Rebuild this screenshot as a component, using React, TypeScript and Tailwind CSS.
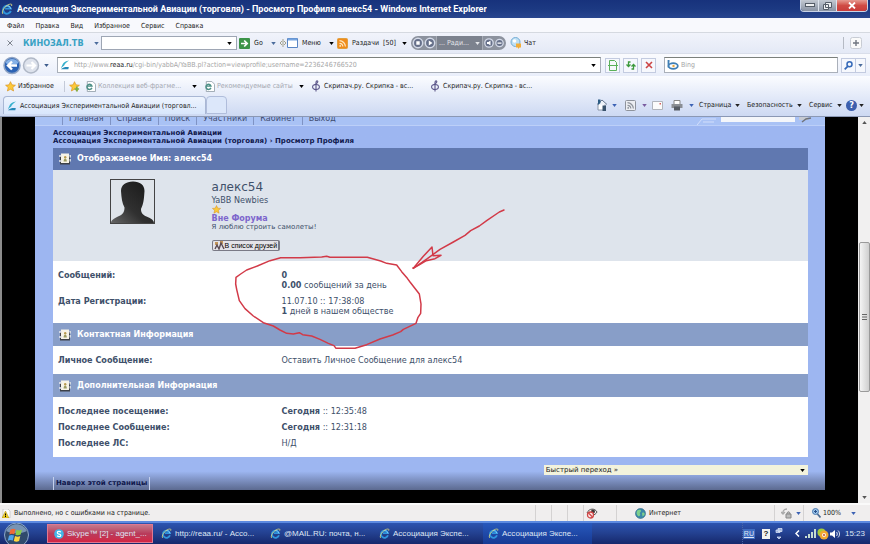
import React from 'react';
import clsx from 'clsx';

type IconProps = { className?: string };

function Caret({ className }: IconProps) {
  return (
    <svg viewBox="0 0 6 4" className={clsx('h-[3px] w-[5px] shrink-0', className)} aria-hidden="true">
      <path d="M0 0h6L3 4z" fill="currentColor" />
    </svg>
  );
}

function IeIcon({ className }: IconProps) {
  return (
    <svg viewBox="0 0 16 16" className={clsx('shrink-0', className)} aria-hidden="true">
      <path d="M13 10.5A5.2 5.2 0 1 1 13 7.500H5.500" fill="none" stroke="#2f95dd" strokeWidth="2.600" />
      <path d="M13 7.800C12.500 4.500 9.500 3 7 4" fill="none" stroke="#8fd4ff" strokeWidth="1.200" />
      <path d="M2.500 14.500C0 12 5 3.500 11 1.800c3-.9 4.200 0 3 2.200" fill="none" stroke="#d8d880" strokeWidth="1.200" />
    </svg>
  );
}

function SiteIcon({ className }: IconProps) {
  return (
    <svg viewBox="0 0 12 12" className={clsx('shrink-0', className)} aria-hidden="true">
      <path d="M1 10 3.500 4.500C4.500 2.500 7 1 11 .5 8.500 2 6 4 5 6.500z" fill="#35b0cc" />
      <path d="M1 11c3-2.500 6-3 9.500-2.500L10 11z" fill="#2388b8" />
    </svg>
  );
}

function PageIeIcon() {
  return (
    <svg viewBox="0 0 12 12" className="size-[11px] shrink-0" aria-hidden="true">
      <path d="M2.500.5h6l3 3v8h-9z" fill="#fff" stroke="#98a4ae" />
      <path d="M7.500 7.500A2.800 2.800 0 1 1 7.600 5.600H2.500" fill="none" stroke="#4c8f86" strokeWidth="1.600" />
    </svg>
  );
}

function StarIcon({ plus, className }: IconProps & { plus?: boolean }) {
  return (
    <svg viewBox="0 0 12 12" className={clsx('shrink-0', className)} aria-hidden="true">
      <path d="m6 .7 1.600 3.500 3.800.4-2.900 2.500.9 3.800L6 9l-3.400 1.900.9-3.800L.6 4.600l3.800-.4z" fill="#fcc93a" stroke="#d8901c" strokeWidth=".7" />
      {plus && <path d="M8.500 6v5.500M6 8.700h5" stroke="#78b04c" strokeWidth="1.800" />}
    </svg>
  );
}

function ViolinIcon() {
  return (
    <svg viewBox="0 0 10 12" className="h-3 w-2.5 shrink-0" aria-hidden="true">
      <g fill="none" stroke="#5a5488" strokeWidth="1.100">
        <path d="M5 11.500V2.500C5 .5 7 .3 6.800 2 6.600 3.200 5 3.800 3.500 4.800" />
        <ellipse cx="5" cy="7" rx="3.400" ry="2.500" />
      </g>
    </svg>
  );
}

function RssIcon({ gray }: { gray?: boolean }) {
  return (
    <svg viewBox="0 0 11 11" className="size-[11px] shrink-0" aria-hidden="true">
      <rect x=".5" y=".5" width="10" height="10" rx="1" fill={gray ? '#eceef2' : '#f08c1c'} stroke={gray ? '#8e939c' : '#e0a040'} />
      <g fill="none" stroke={gray ? '#8e939c' : '#ffe9c0'} strokeWidth="1.200">
        <path d="M2.500 5.300a3.400 3.400 0 0 1 3.300 3.300M2.500 2.700a6 6 0 0 1 5.900 5.900" />
      </g>
      <circle cx="3.200" cy="7.900" r=".9" fill={gray ? '#8e939c' : '#ffe9c0'} />
    </svg>
  );
}

function BookIcon() {
  return (
    <svg viewBox="0 0 13 12" className="h-3 w-[13px] shrink-0" aria-hidden="true">
      <path d="M1 3h10v8.500H1z" fill="#3c4048" />
      <path d="M2 .5h8v9.500H2z" fill="#f6f3e6" />
      <path d="M0 3h3M0 8h3" stroke="#e6e8ec" strokeWidth="1.300" />
      <path d="M10.500 2h1.500v2.500h-1.500zM10.500 6h1.500v2.500h-1.500z" fill="#cfd6de" />
      <circle cx="6.200" cy="4.200" r="1.200" fill="#b89a50" />
      <path d="M4.600 8.500c0-4 3.200-4 3.200 0z" fill="#9a9a60" />
    </svg>
  );
}

function TitleBar() {
  return (
    <header className="flex h-[18px] items-start bg-linear-to-b from-[#17327c] via-[#1c3982] to-[#29468e]">
      <div className="flex h-[18px] min-w-0 flex-1 items-center gap-1 pl-px">
        <IeIcon className="size-3" />
        <h1 className="truncate font-[Roboto,sans-serif] text-[9px] font-bold text-white">
          Ассоциация Экспериментальной Авиации (торговля) - Просмотр Профиля алекс54 - Windows Internet Explorer
        </h1>
      </div>
      <div className="mr-0.5 flex h-3 overflow-hidden rounded-b-sm border border-t-0 border-[#c9d3e6]">
        <button aria-label="Свернуть" className="flex w-[18px] items-center justify-center border-r border-[#dde4ee] bg-linear-to-b from-[#c3c9d2] to-[#8a94a4]">
          <svg viewBox="0 0 10 5" className="h-[5px] w-2.5"><rect x=".5" y=".5" width="9" height="3" fill="#eef0f2" stroke="#555d68" /></svg>
        </button>
        <button aria-label="Свернуть в окно" className="flex w-[18px] items-center justify-center border-r border-[#dde4ee] bg-linear-to-b from-[#c3c9d2] to-[#8a94a4]">
          <svg viewBox="0 0 9 8" className="h-2 w-[9px]"><path d="M2.500.5h6v5h-6zM.5 2.500h5v5h-5z" fill="#eef0f2" stroke="#555d68" /></svg>
        </button>
        <button aria-label="Закрыть" className="flex w-[30px] items-center justify-center bg-linear-to-b from-[#e59a92] via-[#cf4b45] to-[#c93c3a]">
          <svg viewBox="0 0 8 7" className="h-[7px] w-2"><path d="m1 .5 6 6m0-6-6 6" stroke="#fff" strokeWidth="1.800" /></svg>
        </button>
      </div>
    </header>
  );
}

function MenuBar() {
  const items = ['Файл', 'Правка', 'Вид', 'Избранное', 'Сервис', 'Справка'];
  return (
    <nav className="flex h-[15px] items-center gap-[11px] border-b border-[#d5d9e0] bg-[#f8f9fd] pt-0.5 pl-[7px]">
      {items.map((item) => (
        <button key={item}>{item}</button>
      ))}
    </nav>
  );
}

function RadioPlayer() {
  return (
    <div className="flex h-3.5 w-[95px] items-center rounded-full bg-[#8c929e] px-px text-[#e4e6ea]">
      <svg viewBox="0 0 24 12" className="h-3 w-6" aria-hidden="true">
        <g fill="#66708a" stroke="#d4dae8" strokeWidth="1.500">
          <circle cx="6" cy="6" r="4.700" />
          <circle cx="18" cy="6" r="4.700" />
        </g>
        <path d="M4.300 4.300h3.400v3.400H4.300zM16.800 3.500v5L20.500 6z" fill="#fff" />
      </svg>
      <button className="flex h-full flex-1 items-center justify-center gap-1.5 border-x border-[#a6abb5] bg-[#7c828e]">
        ... Ради... <Caret />
      </button>
      <svg viewBox="0 0 22 12" className="h-3 w-[22px]" aria-hidden="true">
        <g fill="#66708a" stroke="#d4dae8" strokeWidth="1.300">
          <circle cx="6" cy="6" r="4.200" />
          <circle cx="16.500" cy="6" r="3.700" />
        </g>
        <path d="M4 5h1.500L7.500 3.500v5L5.500 7H4zM14.500 5.400h4v1.300h-4z" fill="#fff" />
      </svg>
    </div>
  );
}

function LinksBar() {
  return (
    <div className="flex h-[21px] items-center border-b border-[#d9deea] bg-linear-to-b from-[#f1f3fb] to-[#e4e9f6]">
      <button aria-label="Закрыть панель" className="ml-[7px] w-4">
        <svg viewBox="0 0 6 6" className="size-1.5"><path d="m.5.5 5 5m0-5-5 5" stroke="#7c828c" /></svg>
      </button>
      <button className="flex w-[78px] items-center justify-between pr-0.5 text-[#4b6c9c]">
        <span className="font-[DejaVu_Sans_Condensed,DejaVu_Sans,sans-serif] text-[9px] font-bold text-[#3aa2c4]">КИНОЗАЛ.ТВ</span>
        <Caret />
      </button>
      <div className="flex h-3.5 w-[136px] items-center border border-[#9ea6b4] bg-white pr-1">
        <input aria-label="Поиск по сайту" className="h-full min-w-0 flex-1 px-1 outline-none" />
        <Caret className="text-black" />
      </div>
      <button className="flex w-[42px] items-center gap-1 pl-0.5">
        <svg viewBox="0 0 11 11" className="size-[11px] shrink-0"><rect width="11" height="11" rx="1" fill="#3c9448" /><path d="M2 5.500h5M5.200 2.500l3 3-3 3" fill="none" stroke="#fff" strokeWidth="1.700" /></svg>
        Go
        <Caret className="ml-1 text-[#4b6c9c]" />
      </button>
      <svg viewBox="0 0 8 8" className="size-2 shrink-0" aria-hidden="true"><path d="M4 0v8M3 2 1 4l2 2M5 2l2 2-2 2" fill="none" stroke="#a3a18c" /></svg>
      <button className="flex w-[47px] items-center gap-1">
        <svg viewBox="0 0 11 10" className="h-2.5 w-[11px] shrink-0"><path d="M.5.5h10v9H.5z" fill="#fff" stroke="#5a86c4" /><path d="M1 1.500h9" stroke="#75a4e0" strokeWidth="2" /></svg>
        Меню
        <Caret className="ml-auto text-black" />
      </button>
      <button className="flex w-[73px] items-center gap-1 pl-[3px]">
        <RssIcon />
        Раздачи&nbsp; [50]
        <Caret className="ml-auto text-black" />
      </button>
      <div className="ml-1"><RadioPlayer /></div>
      <button className="ml-1 flex items-center gap-0.5">
        <svg viewBox="0 0 12 12" className="size-3"><circle cx="5.500" cy="5" r="4.500" fill="#bfe0f4" stroke="#74acd4" /><circle cx="4.500" cy="4" r="1.800" fill="#fff" /><path d="M6 6.500h5v4H9.500L8 12v-1.500H6z" fill="#f2ad38" /></svg>
        Чат
      </button>
      <button aria-label="Добавить" className="mr-2 ml-auto border-l border-[#b5bac4] pl-1.5">
        <svg viewBox="0 0 12 12" className="size-3"><rect x=".5" y=".5" width="11" height="11" rx="2" fill="#fafafa" stroke="#c8ccd4" /><path d="M6 3v6M3 6h6" stroke="#707680" strokeWidth="1.400" /></svg>
      </button>
    </div>
  );
}

const SQUARE = 'flex size-[15px] shrink-0 items-center justify-center border border-[#c3cbe0] bg-[#f6f8fd]';

function AddressBar() {
  return (
    <div className="flex h-[22px] items-center bg-linear-to-b from-[#fafbfe] to-[#e9eefa]">
      <div className="flex w-[57px] shrink-0 items-center gap-1 pl-[3px]">
        <svg viewBox="0 0 37 19" className="h-[19px] w-[37px]" aria-hidden="true">
          <circle cx="9" cy="9.500" r="8" fill="#2b62b4" stroke="#8fa4c4" strokeWidth="1.500" />
          <path d="M2.500 7C4 1.500 14 1.500 15.500 7 12 9 6 9 2.500 7z" fill="#86b1e6" />
          <path d="M14 9.500H6M9 5.500l-4 4 4 4" fill="none" stroke="#fff" strokeWidth="2.400" />
          <circle cx="28" cy="9.500" r="7.500" fill="#dde2ec" stroke="#b0b8c6" strokeWidth="1.500" />
          <path d="M23.500 9.500h8M28.500 6l3.500 3.500-3.500 3.500" fill="none" stroke="#fff" strokeWidth="2.200" />
        </svg>
        <Caret className="text-[#3c5c8c]" />
      </div>
      <div className="flex h-4 min-w-0 flex-1 items-center border border-[#aab0ba] border-t-[#7b807c] bg-white pr-1 pl-0.5">
        <SiteIcon className="size-2.5" />
        <div className="ml-1 min-w-0 flex-1 truncate text-[#a6a6a6]">
          http://www.<span className="text-[#222]">reaa.ru</span>/cgi-bin/yabbA/YaBB.pl?action=viewprofile;username=2236246766520
        </div>
        <Caret className="text-black" />
      </div>
      <div className="flex gap-[3px] px-1">
        <button aria-label="Режим совместимости" className={SQUARE}>
          <svg viewBox="0 0 10 11" className="h-[11px] w-2.5"><path d="M1.500.5h5l2 2v8h-7zM0 5.500h10" fill="none" stroke="#5ab05a" /></svg>
        </button>
        <button aria-label="Обновить" className={SQUARE}>
          <svg viewBox="0 0 10 9" className="h-[9px] w-2.5"><path d="M4.500 1H2.500v4M.5 3.500l2 2 2-2M5.500 8h2V3.500M5.500 5.500l2-2 2 2" fill="none" stroke="#3d9a3d" strokeWidth="1.300" /></svg>
        </button>
        <button aria-label="Остановить" className={SQUARE}>
          <svg viewBox="0 0 8 8" className="size-2"><path d="m1 1 6 6m0-6L1 7" stroke="#cc4444" strokeWidth="1.600" /></svg>
        </button>
      </div>
      <div className="ml-1 flex h-4 w-[174px] items-center gap-0.5 border border-[#aab0ba] border-t-[#7b807c] bg-white pl-0.5">
        <svg viewBox="0 0 12 10" className="h-2.5 w-3 shrink-0" aria-hidden="true">
          <path d="M1.500 0v7.500M1 1h1.500" stroke="#3f7fb6" strokeWidth="1.800" />
          <ellipse cx="6.200" cy="6" rx="4.600" ry="2.800" fill="#fff" stroke="#3f7fb6" strokeWidth="1.800" />
          <circle cx="6.500" cy="6" r="1.200" fill="#e8a63c" />
        </svg>
        <input aria-label="Поиск" placeholder="Bing" className="h-full min-w-0 flex-1 outline-none placeholder:text-[#a6a6a6]" />
      </div>
      <button aria-label="Найти" className={clsx(SQUARE, 'ml-[3px]')}>
        <svg viewBox="0 0 9 9" className="size-[9px]"><circle cx="5.500" cy="3.300" r="2.500" fill="none" stroke="#3569b8" strokeWidth="1.500" /><path d="m3.700 5.300-3 3" stroke="#3569b8" strokeWidth="1.800" /></svg>
      </button>
      <button aria-label="Варианты поиска" className="mr-1 flex h-[15px] w-2.5 items-center justify-center border border-l-0 border-[#c3cbe0] bg-[#f6f8fd] text-[#4b6c9c]">
        <Caret />
      </button>
    </div>
  );
}

function FavoritesBar() {
  return (
    <div className="flex h-5 items-center pl-[5px]">
      <button className="flex w-[59px] items-center gap-0.5"><StarIcon className="size-[11px]" />Избранное</button>
      <button aria-label="Добавить в избранное" className="w-[21px] border-l border-[#c4cad8] pl-1">
        <StarIcon plus className="size-[11px]" />
      </button>
      <button className="flex w-[119px] items-center gap-0.5 text-[#a3a7b0]">
        <PageIeIcon />Коллекция веб-фрагме...
        <Caret className="mr-[7px] ml-auto text-black" />
      </button>
      <button className="flex w-[107px] items-center gap-0.5 text-[#a3a7b0]">
        <PageIeIcon />Рекомендуемые сайты
        <Caret className="mr-[7px] ml-auto text-black" />
      </button>
      <a href="#" className="flex w-[119px] items-center gap-[3px]"><ViolinIcon />Скрипач.ру. Скрипка - вс...</a>
      <a href="#" className="flex items-center gap-[3px]"><ViolinIcon />Скрипач.ру. Скрипка - вс...</a>
    </div>
  );
}

function TabBar() {
  return (
    <div className="flex h-[21px] items-start justify-between border-b border-[#8b98b4] pr-1.5 pl-[3px]">
      <div className="flex h-[18px] items-stretch">
        <button className="flex w-[203px] items-center gap-[3px] rounded-t-sm border border-b-0 border-[#a9b7d4] bg-linear-to-b from-[#eef4fe] to-[#d8e6fc] pl-[3px]">
          <SiteIcon className="size-2.5" />
          Ассоциация Экспериментальной Авиации (торговл...
        </button>
        <button aria-label="Новая вкладка" className="w-[21px] rounded-t-sm border border-[#b0bddb] bg-[#dce7fa]" />
      </div>
      <div className="flex h-[18px] items-center text-[#222]">
        <button aria-label="Домой" className="flex w-[29px] items-center gap-1">
          <svg viewBox="0 0 12 12" className="size-3"><path d="M1 5.500 6 1l5 4.500" fill="#eef2f8" stroke="#64748c" /><path d="M2 5.500V11h7V5.500" fill="#fff" stroke="#8a96a8" /><path d="M2 .5h2.500V4L2 6z" fill="#2c5c84" /><path d="M6.500 6.500h3.500V12H6.500z" fill="#39526c" /></svg>
          <Caret className="text-[#3c62b4]" />
        </button>
        <button aria-label="Каналы" className="flex w-[27px] items-center gap-1.5">
          <RssIcon gray /><Caret className="text-[#7a5ca0]" />
        </button>
        <button aria-label="Почта" className="w-[19px]">
          <svg viewBox="0 0 11 9" className="h-[9px] w-[11px]"><path d="M.5.5h10v8H.5z" fill="#fbfbfb" stroke="#b0b4bc" /><path d="M7.500 2h1.500v1.500H7.500z" fill="#d86060" /></svg>
        </button>
        <button aria-label="Печать" className="flex w-7 items-center gap-1.5">
          <svg viewBox="0 0 12 11" className="h-[11px] w-3"><path d="M3 .5h6v4H3z" fill="#fff" stroke="#888" /><path d="M.5 4h11v4H.5z" fill="#8a8e94" /><path d="M3 6.500h6v4H3z" fill="#555b64" /></svg>
          <Caret className="text-[#3c62b4]" />
        </button>
        <button className="flex w-12 items-center gap-1">Страница<Caret /></button>
        <button className="flex w-[62px] items-center gap-1">Безопасность<Caret /></button>
        <button className="flex w-[37px] items-center gap-1">Сервис<Caret /></button>
        <button aria-label="Справка" className="flex items-center gap-0.5">
          <span className="flex size-[11px] items-center justify-center rounded-full bg-[#3c5fae] text-[9px] font-bold text-white">?</span>
          <Caret />
        </button>
      </div>
    </div>
  );
}

function ForumNav() {
  const items = ['Главная', 'Справка', 'Поиск', 'Участники', 'Кабинет', 'Выход'];
  return (
    <div className="flex h-[9px] items-end justify-between overflow-hidden border-b border-[#bccff8] bg-[#a9c2f5] pl-[27px]">
      <ul className="flex items-end">
        {items.map((item) => (
          <li key={item} className="border-l border-[#7f93c4] px-1.5 text-[8px] leading-[12px]">
            <a href="#" className="text-[#414c70]">{item}</a>
          </li>
        ))}
      </ul>
      <div className="flex h-full items-start gap-1 pr-3">
        <svg viewBox="0 0 20 8" className="h-2 w-5" aria-hidden="true"><path d="M0 8 5 2h14M6 5h11" fill="none" stroke="#d2defb" /></svg>
        <input aria-label="Поиск по форуму" className="h-[5px] w-[74px] bg-[#f4f6fa]" />
        <svg viewBox="0 0 14 6" className="h-1.5 w-3.5" aria-hidden="true"><path d="M0 0h9v3H0z" fill="#c6cad2" /><path d="m3 5 4-3 5-1" stroke="#70747c" strokeWidth="1.500" fill="none" /></svg>
      </div>
    </div>
  );
}

function SectionRow({ title, dark }: { title: string; dark?: boolean }) {
  return (
    <tr className={dark ? 'bg-[#6078b0]' : 'bg-[#889ec8]'}>
      <th colSpan={2} className={clsx('text-left font-[DejaVu_Sans,Verdana,sans-serif] text-[8px] font-bold text-white', dark ? 'h-[22px]' : 'h-[23px]')}>
        <div className="flex items-center gap-[5px] pl-1.5">
          <BookIcon />
          {title}
        </div>
      </th>
    </tr>
  );
}

function InfoRow({ label, className, children }: { label: string; className?: string; children: React.ReactNode }) {
  return (
    <tr className={clsx('bg-white', className)}>
      <th className="pl-[5px] text-left align-top font-bold">{label}</th>
      <td className="pl-0.5 align-top">{children}</td>
    </tr>
  );
}

function Avatar() {
  return (
    <svg viewBox="0 0 45 45" className="size-[45px]" role="img" aria-label="Аватар">
      <defs>
        <linearGradient id="skin" x1="0" x2="1" y1="1" y2="0">
          <stop offset="0" stopColor="#666" />
          <stop offset=".4" stopColor="#303030" />
          <stop offset="1" stopColor="#161616" />
        </linearGradient>
      </defs>
      <rect x=".5" y=".5" width="44" height="44" fill="#dfe4ea" stroke="#444" />
      <path d="M1 44c0-3 3-4.500 7-6.500 5-2 6.500-4.500 6.500-9C12 24 11.500 19 11 12c0-6 5-9.500 12-9.500S34.500 6 34.500 12c-.5 8-1 13-3.500 18 0 4 2 6 5.500 7.500 5 2 7.500 4 7.500 6.500z" fill="url(#skin)" />
    </svg>
  );
}

function ProfileCard() {
  return (
    <div className="flex h-[91px] bg-[#dee4ec] pt-[9px]">
      <div className="flex w-[21%] justify-center"><Avatar /></div>
      <div className="flex flex-col items-start">
        <h2 className="font-[DejaVu_Sans,Verdana,sans-serif] text-[12px] leading-4">алекс54</h2>
        <p>YaBB Newbies</p>
        <StarIcon className="size-[9px]" />
        <p className="font-[DejaVu_Sans,Verdana,sans-serif] text-[8px] leading-[9px] font-bold text-[#7d66cc]">Вне Форума</p>
        <p className="font-[DejaVu_Sans,Verdana,sans-serif] text-[7px] leading-[9px]">Я люблю строить самолеты!</p>
        <button className="mt-2 flex h-[11px] items-center rounded-xs border border-[#7a7a86] border-r-2 bg-[#e4e3e8] px-px font-[Liberation_Sans,Arial,sans-serif] text-[7px] text-black">
          <svg viewBox="0 0 11 9" className="h-[9px] w-[11px]" aria-hidden="true"><path d="M1 1h3v3H1zM6 0h3v3H6z" fill="#c4965a" /><path d="m1 8 2-4 2 4 2-6 3 6" fill="none" stroke="#5a4a52" strokeWidth="1.400" /></svg>
          В список друзей
        </button>
      </div>
    </div>
  );
}

// Hand-drawn red circle and arrow over the registration data
function Scribble() {
  return (
    <svg viewBox="0 0 900 540" className="pointer-events-none absolute top-8 left-[167px] h-[180px] w-[300px]" aria-hidden="true">
      <g fill="none" stroke="#d23a48" strokeWidth="4.500" strokeLinejoin="round" strokeLinecap="round">
        <path d="M48 292 62 282 80 270 112 258 150 242 182 233 240 233 305 231 320 229 330 232 442 232 482 243 500 250 530 255 545 275 562 295 570 306 598 342 603 372 602 400 594 412 588 430 550 448 542 455 518 465 480 477 440 494 405 505 348 505 342 497 325 490 300 478 275 468 248 464 238 458 220 462 200 460 180 450 160 438 130 428 100 408 75 386 58 362 50 328 47 312z" />
        <path d="M852 90 838 96 800 122 778 138 752 152 735 166 700 186 660 208 622 236 580 265" />
        <path d="m580 265 30-36 26-28 3 26 24-1-18 10-26 6-24 14-16 8z" />
      </g>
    </svg>
  );
}

function ForumPage() {
  return (
    <main className="flex min-h-0 flex-1 border-l-2 border-[#8c8c8c] bg-black">
      <div className="min-w-0 flex-1 px-[33px] pb-[13px]">
        <div className="bg-linear-to-b from-[#9db6f1] from-95% to-[#5c6a90] font-[DejaVu_Sans,Verdana,sans-serif] text-[9px] leading-[10px] text-[#40506a]">
          <ForumNav />
          <div className="pr-[17px] pl-[18px]">
            <div className="pt-[3px] pb-[3px] text-[7px] leading-[8px] font-bold text-[#10184c]">
              <p><a href="#">Ассоциация Экспериментальной Авиации</a></p>
              <p><a href="#">Ассоциация Экспериментальной Авиации (торговля)</a> › Просмотр Профиля</p>
            </div>
            <div className="relative">
              <table className="w-full table-fixed border-collapse font-[DejaVu_Sans_Condensed,DejaVu_Sans,sans-serif] text-[9px]">
                <colgroup>
                  <col className="w-[30%]" />
                  <col />
                </colgroup>
                <tbody>
                  <SectionRow dark title="Отображаемое Имя: алекс54" />
                  <tr><td colSpan={2} className="p-0"><ProfileCard /></td></tr>
                  <InfoRow label="Сообщений:" className="h-[35px] [&>*]:pt-[9px]">
                    <b>0</b><br /><b>0.00</b> сообщений за день
                  </InfoRow>
                  <InfoRow label="Дата Регистрации:" className="h-[27px]">
                    11.07.10 :: 17:38:08<br /><b>1</b> дней в нашем обществе
                  </InfoRow>
                  <SectionRow title="Контактная Информация" />
                  <InfoRow label="Личное Сообщение:" className="h-7 [&>*]:pt-[9px]">
                    <a href="#">Оставить Личное Сообщение для алекс54</a>
                  </InfoRow>
                  <SectionRow title="Дополнительная Информация" />
                  <InfoRow label="Последнее посещение:" className="h-[25px] [&>*]:pt-[9px]"><b>Сегодня</b> :: 12:35:48</InfoRow>
                  <InfoRow label="Последнее Сообщение:" className="h-4"><b>Сегодня</b> :: 12:31:18</InfoRow>
                  <InfoRow label="Последнее ЛС:" className="h-[19px]">Н/Д</InfoRow>
                </tbody>
              </table>
              <Scribble />
            </div>
            <div className="mt-2 ml-auto grid w-[35%] items-center text-[7px]">
              <select aria-label="Быстрый переход" className="col-start-1 row-start-1 h-2.5 appearance-none bg-[#f3f3dc] pl-0.5 text-[#222] outline-none">
                <option>Быстрый переход »</option>
              </select>
              <Caret className="pointer-events-none col-start-1 row-start-1 mr-[3px] justify-self-end text-black" />
            </div>
            <div className="mt-0.5 flex h-[13px]">
              <a href="#" className="border-x border-[#c4d0ec] px-0.5 text-[7px] leading-[12px] font-bold text-[#10184c]">Наверх этой страницы</a>
            </div>
          </div>
        </div>
      </div>
      <div className="flex w-3 flex-col items-center justify-between bg-[#f1f0f0] py-1 text-[#555]">
        <Caret className="rotate-180" />
        <div className="mt-[118px] mb-auto flex h-[150px] w-[11px] items-center justify-center rounded-xs border border-[#9a9a9a] bg-linear-to-r from-[#f4f4f4] to-[#cfcfcf]">
          <svg viewBox="0 0 5 6" className="h-1.5 w-[5px]" aria-hidden="true"><path d="M0 .5h5M0 3h5M0 5.500h5" stroke="#666" /></svg>
        </div>
        <Caret />
      </div>
    </main>
  );
}

function StatusBar() {
  return (
    <footer className="flex h-[18px] items-stretch border-t-2 border-[#fafafa] bg-[#f0eeee]">
      <div className="flex flex-1 items-center gap-[3px] pl-0.5">
        <svg viewBox="0 0 9 9" className="size-[9px]" aria-hidden="true"><path d="M1 0h5l2 2v7H1z" fill="#fff" stroke="#aaa" strokeWidth=".5" /><path d="M0 9 3.500 2 7 9z" fill="#f3d024" stroke="#9a8618" strokeWidth=".5" /><path d="M3.500 4.500v2M3.500 7v1" stroke="#000" /></svg>
        Выполнено, но с ошибками на странице.
      </div>
      <div className="w-4 border-l border-[#d4d2d2]" />
      <div className="w-4 border-l border-[#d4d2d2]" />
      <div className="w-4 border-l border-[#d4d2d2]" />
      <div className="flex w-[33px] items-center border-l border-[#d4d2d2] pl-0.5">
        <svg viewBox="0 0 12 12" className="size-3" aria-hidden="true"><path d="M1 6c2-5 8-5 10-1-2 4-7 4-10 1z" fill="#eee" stroke="#555" /><circle cx="7" cy="4.500" r="2" fill="#403838" /><circle cx="4.500" cy="8" r="3" fill="#fbe8e8" stroke="#d04848" strokeWidth="1.300" /><path d="m2.500 6 4 4" stroke="#d04848" strokeWidth="1.300" /></svg>
      </div>
      <div className="w-4 border-l border-[#d4d2d2]" />
      <div className="flex w-[142px] items-center gap-[3px] pl-[3px]">
        <svg viewBox="0 0 11 11" className="size-[11px]" aria-hidden="true"><circle cx="5.500" cy="5.500" r="5" fill="#3b88a8" stroke="#2a6684" strokeWidth=".6" /><path d="M2 3c2-2 4-1 4 0S4 5 5 6 4 9 3 8 1 5 2 3zM7 5c2-1 3 0 2.500 2L7.500 8.500z" fill="#7fd08c" /></svg>
        Интернет
      </div>
      <button aria-label="Защищенный режим" className="flex w-[29px] items-center gap-1 border-l border-[#d4d2d2] pl-1.5 text-[#3c62b4]">
        <svg viewBox="0 0 11 11" className="size-[11px]" aria-hidden="true"><path d="M6 1C3 1 1.500 3 2 6M0 4l2 2 2-2" fill="none" stroke="#aaa" strokeWidth="1.300" /><path d="M5 6h5v4H5zM6 6c0-3 3-3 3 0" fill="#bbb" stroke="#888" /></svg>
        <Caret />
      </button>
      <button className="mr-3.5 flex items-center gap-0.5 border-l border-[#d4d2d2] pl-2">
        <svg viewBox="0 0 9 10" className="h-2.5 w-[9px]" aria-hidden="true"><circle cx="3.500" cy="3.500" r="3" fill="#9cc4e8" stroke="#4a7ab0" /><path d="m5.500 6 3 3.500" stroke="#4a6a90" strokeWidth="1.700" /><path d="M3.500 2v3M2 3.500h3" stroke="#28508c" /></svg>
        100%
        <Caret className="ml-2 text-[#3c62b4]" />
      </button>
    </footer>
  );
}

function TaskBar() {
  const windows = ['http://reaa.ru/ - Ассо...', '@MAIL.RU: почта, н...', 'Ассоциация Экспе...', 'Ассоциация Экспе...'];
  return (
    <div className="flex h-[23px] shrink-0 items-stretch border-t-2 border-[#5c8ae0] bg-linear-to-b from-[#2c54b0] via-[#23408f] to-[#16286c] font-[Liberation_Sans,Arial,sans-serif] text-[8px] text-[#dfe6f4]">
      <button aria-label="Пуск" className="w-[47px] pl-[3px]">
        <svg viewBox="0 0 28 21" className="h-[21px] w-7" aria-hidden="true">
          <circle cx="13.500" cy="12" r="12" fill="#304a6c" stroke="#8da8cc" />
          <path d="M3 8C7-1 20-1 24 8 18 11 9 11 3 8z" fill="#7894b4" />
          <path d="M7.500 6.500c2-1.200 3.500-1 5-.2l-1.200 5c-1.500-.8-3-.9-5 .1z" fill="#f06a38" />
          <path d="M13.500 6.700c2 1 3.500 1 5.500-.1l-1.300 5c-2 1-3.500 1-5.300.1z" fill="#8ccc48" />
          <path d="M6 12.700c2-1.100 3.500-.8 5-.1l-1.200 5c-1.500-.8-3-.9-5 .1z" fill="#50a4ec" />
          <path d="M12 13c2 1 3.500 1 5.300 0l-1.200 5c-2 1-3.500.9-5.300 0z" fill="#fcd440" />
        </svg>
      </button>
      <button className="my-px flex w-[106px] items-center gap-[3px] border border-[#e07890] bg-linear-to-b from-[#c4788c] via-[#b83c5c] to-[#d42444] pl-1.5">
        <svg viewBox="0 0 10 10" className="size-2.5" aria-hidden="true"><circle cx="5" cy="5" r="4.800" fill="#42b6e8" /><path d="M6.800 3.300C6 2 3.300 2.200 3.300 3.700c0 1.700 3.500 1 3.500 2.600C6.800 8 4 8 3.200 6.600" fill="none" stroke="#fff" strokeWidth="1.200" /></svg>
        Skype™ [2] - agent_...
      </button>
      <div className="flex flex-1 pl-[3px]">
        {windows.map((title, i) => (
          <button key={i} className={clsx('flex w-[109px] items-center gap-[3px] pl-[5px]', i === 3 && 'bg-linear-to-b from-[#2858bc] to-[#173a94]')}>
            <IeIcon className="size-[11px]" />
            {title}
          </button>
        ))}
      </div>
      <div className="flex items-center gap-[5px] border-l border-dotted border-[#4a64a4] pr-[5px]">
        <button className="bg-[#3f6cc0] px-px text-[7px] underline">RU</button>
        <button className="ml-0.5 flex h-2.5 w-2 items-center justify-center bg-[#f4f4f0] font-bold text-[#222]">?</button>
        <svg viewBox="0 0 8 12" className="h-3 w-2" aria-hidden="true"><path d="M3 .5h4v3H3zM1 2h4v2.500H1zM2 9h4L4 11z" fill="#8ea8dc" stroke="#e8eefa" strokeWidth=".7" /></svg>
        <svg viewBox="0 0 5 7" className="ml-[7px] h-[7px] w-[5px]" aria-hidden="true"><path d="M4 .5 1 3.500l3 3" fill="none" stroke="#fff" strokeWidth="1.500" /></svg>
        <div className="flex items-center gap-px">
          <svg viewBox="0 0 11 9" className="h-[9px] w-[11px]" aria-hidden="true"><path d="M1 9V7M4 9V5M7 9V3M10 9V0" stroke="#c4dcd0" strokeWidth="2" /></svg>
          <svg viewBox="0 0 12 12" className="size-3" aria-hidden="true"><circle cx="4.500" cy="4.500" r="4" fill="#a4cc3c" /><circle cx="7" cy="7" r="4.500" fill="#f4a830" /><circle cx="7" cy="7" r="2" fill="#fbf4e8" /><circle cx="7" cy="7" r="1" fill="#c84c30" /></svg>
          <svg viewBox="0 0 10 10" className="size-2.5" aria-hidden="true"><path d="M0 3.500h2L5 1v8L2 6.500H0z" fill="#fff" /><path d="M6.500 3c1 1 1 3 0 4M8 1.500c2 2 2 5 0 7" fill="none" stroke="#dfe6f4" /></svg>
        </div>
        <time>15:23</time>
      </div>
    </div>
  );
}

export default function App() {
  return (
    <div className="flex min-h-screen flex-col font-[DejaVu_Sans_Condensed,DejaVu_Sans,sans-serif] text-[7px] leading-[10px] whitespace-nowrap text-[#222]">
      <TitleBar />
      <MenuBar />
      <LinksBar />
      <AddressBar />
      <div className="bg-linear-to-b from-[#fbfcff] to-[#ccd8f2]">
        <FavoritesBar />
        <TabBar />
      </div>
      <ForumPage />
      <StatusBar />
      <TaskBar />
    </div>
  );
}
